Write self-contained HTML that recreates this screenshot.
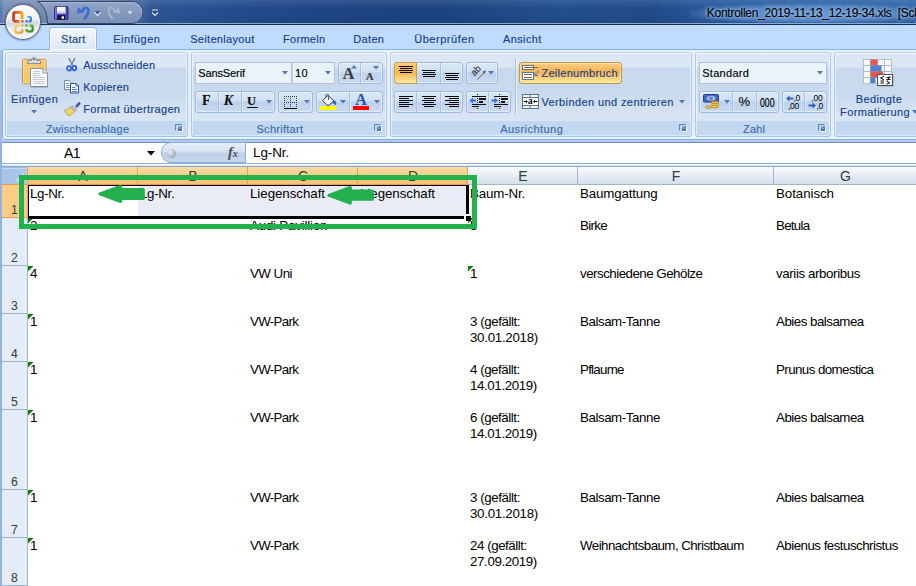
<!DOCTYPE html>
<html lang="de"><head><meta charset="utf-8"><title>Kontrollen_2019-11-13_12-19-34.xls</title>
<style>
*{box-sizing:border-box;margin:0;padding:0}
html,body{width:916px;height:586px;overflow:hidden;background:#fff}
body{position:relative;font-family:"Liberation Sans",sans-serif;font-size:12px;color:#15428b}
.a{position:absolute}
.t{position:absolute;white-space:nowrap;line-height:14px}
/* title */
#title{left:0;top:0;width:916px;height:25px;background:linear-gradient(90deg,#5b80b5 0,#5b80b5 2px,#7a90b6 3px,#788fb5 40px,#5f7aa8 100px,#3d6099 144px,#2e5796 150px,#234b8c 250px,#1d4584 350px,#1c4482 440px,#23508e 560px,#214c8a 650px,#27569a 700px,#2e60a3 780px,#3265a8 916px)}
#titleshade{left:0;top:0;width:916px;height:25px;background:linear-gradient(180deg,rgba(255,255,255,.10) 0,rgba(255,255,255,0) 8px,rgba(0,0,0,.05) 22px,rgba(0,0,0,.05) 23px,rgba(170,195,225,.75) 23px,rgba(170,195,225,.75) 24px,transparent 24px)}
#titleline{left:0;top:24px;width:916px;height:1px;background:#1c2c48}
#tabs{left:0;top:25px;width:916px;height:25px;background:#bfdbff}
#ribbon{left:2px;top:49px;width:930px;height:91px;border:1px solid #8db2e3;border-bottom-color:#9bb0d4;border-radius:3px;background:linear-gradient(180deg,#e8f1fb 0,#e6effa 3px,#e3edf9 70px,#e6f0fb 86px,#f0f7fe 87px,#f0f7fe 88px,#cdf3fa 88px,#cdf3fa 89px)}
.grp{position:absolute;top:52px;height:85px;border:1px solid #b1c9e6;border-top-color:#c4d3e2;border-bottom-color:#9ebfe6;border-radius:3px;background:linear-gradient(180deg,#dde8f6 0,#dbe6f4 14px,#c9d9ed 15px,#cadaee 40px,#d9e6f4 68px,#c2d8f0 68px,#c1d8f1 84px);box-shadow:inset 1px 1px 0 rgba(255,255,255,.55),inset -1px -1px 0 rgba(255,255,255,.45)}
.glab{position:absolute;top:122px;font-size:12px;line-height:14px;color:#3e6aaa;white-space:nowrap;text-align:center}
.c{font-size:13.33px;line-height:16px;color:#000}
</style></head><body>
<div id="title" class="a"></div><div id="titleshade" class="a"></div><div id="titleline" class="a"></div>
<div id="tabs" class="a"></div>
<div id="ribbon" class="a"></div>
<!--GROUPS-->
<svg class="a" style="left:30px;top:0px" width="125" height="26"><defs><linearGradient id="qg" x1="0" y1="0" x2="0" y2="1"><stop offset="0" stop-color="#93a6c7"/><stop offset=".5" stop-color="#8398bd"/><stop offset="1" stop-color="#7a90b7"/></linearGradient></defs>
<path d="M7.5 1.5 H102 A11 11 0 0 1 102 23.5 H17.5 C17.5 12 13 4.5 7.5 1.5 Z" fill="url(#qg)" stroke="#34476b" stroke-width="1"/>
<path d="M10.5 2.6 H102 A9.9 9.9 0 0 1 111.9 12.5" fill="none" stroke="#aebbd4" stroke-width="1" opacity=".8"/></svg>
<div class="a" id="orb" style="left:5px;top:4px;width:36px;height:36px;border-radius:18px;background:linear-gradient(180deg,#fbfcfe 0,#eef1f7 40%,#d9dfea 48%,#cfd7e5 54%,#e6eaf2 68%,#f5f7fb 100%);border:1px solid #5f6c84;box-shadow:0 0 2px rgba(20,30,50,.85), inset 0 0 2px 1px rgba(255,255,255,.9)"></div>
<svg class="a" style="left:5px;top:4px" width="36" height="36"><defs><linearGradient id="og1" x1="0" y1="0" x2="1" y2="0"><stop offset="0" stop-color="#d63a0c"/><stop offset="1" stop-color="#f8a020"/></linearGradient>
<linearGradient id="og2" x1="0" y1="0" x2="1" y2="1"><stop offset="0" stop-color="#fdd774"/><stop offset="1" stop-color="#f59a14"/></linearGradient>
<linearGradient id="og3" x1="0" y1="0" x2="1" y2="1"><stop offset="0" stop-color="#7fc043"/><stop offset="1" stop-color="#3f8a1f"/></linearGradient>
<linearGradient id="og4" x1="0" y1="0" x2="1" y2="1"><stop offset="0" stop-color="#5eb0ee"/><stop offset="1" stop-color="#1d63c8"/></linearGradient></defs>
<path d="M14.600 17.450 H10.550 A2 2 0 0 1 8.550 15.450 V10.350 A2 2 0 0 1 10.550 8.350 H15.150 A2 2 0 0 1 17.150 10.350 V15" fill="none" stroke="url(#og1)" stroke-width="2.7"/>
<path d="M22.500 13 H24.600 A1.300 1.300 0 0 1 25.900 14.300 V16.200 A1.300 1.300 0 0 1 24.600 17.500 H23.500" fill="none" stroke="url(#og4)" stroke-width="1.9"/>
<path d="M14 21.500 H12.100 A1.800 1.800 0 0 0 10.300 23.300 V26.800 A1.800 1.800 0 0 0 12.100 28.600 H15.500 A1.800 1.800 0 0 0 17.300 26.800 V25" fill="none" stroke="url(#og2)" stroke-width="2.4"/>
<path d="M24.500 21.500 H25.900 A1.800 1.800 0 0 1 27.700 23.300 V25.600 A1.800 1.800 0 0 1 25.900 27.400 H23.100 A1.800 1.800 0 0 1 21.300 25.600 V25" fill="none" stroke="url(#og3)" stroke-width="2.4"/>
<circle cx="17.4" cy="17.2" r="1.2" fill="#e8501a"/><circle cx="21.5" cy="17.2" r="1.2" fill="#2f7bd8"/><circle cx="17.4" cy="21.5" r="1.2" fill="#f6b02c"/><circle cx="21.5" cy="21.5" r="1.2" fill="#5aa52c"/></svg>
<svg class="a" style="left:54px;top:6px" width="15" height="14"><rect x="0.5" y="0.500" width="13.500" height="13" rx="1" fill="#4c43b8" stroke="#2f2a86"/><rect x="1" y="1" width="1.500" height="12" fill="#8f8ad8" opacity=".8"/><rect x="3" y="0.800" width="8.500" height="6.500" fill="#f6f7fb"/><rect x="3" y="5" width="8.500" height="2.300" fill="#d5d8e6"/><rect x="3.500" y="9.300" width="7.500" height="4.200" fill="#0e0e2a"/><rect x="7.500" y="10.300" width="2.500" height="2.500" fill="#e8e8f0"/></svg>
<svg class="a" style="left:74px;top:3px" width="18" height="18"><path d="M8.500 8 C9.500 3.800 14.500 3.300 14.500 7.800 C14.500 11 12.500 13.500 10.800 15.300" fill="none" stroke="#3a6fd8" stroke-width="2.500" stroke-linecap="round"/><path d="M2.600 10.600 L4.300 4.300 L10.300 9.300 Z" fill="#3a6fd8"/></svg>
<svg class="a" style="left:94px;top:10px" width="8" height="7"><path d="M0.800 1.200h5.600l-2.800 3.400z" fill="#2d4f9a"/><path d="M0.700 2.300l2.900 3.200 2.900-3.200" fill="none" stroke="#f0f4fa" stroke-width="1.100"/></svg>
<svg class="a" style="left:105px;top:3px" width="18" height="18"><path d="M9.500 8 C8.500 3.800 3.500 3.300 3.500 7.800 C3.500 11 5.500 13.500 7.200 15.300" fill="none" stroke="#a9b6cf" stroke-width="2" stroke-linecap="round"/><path d="M15.400 10.600 L13.700 4.300 L7.700 9.300 Z" fill="#a9b6cf"/></svg>
<svg class="a" style="left:126px;top:10px" width="8" height="6"><path d="M1 1h6l-3 3.600z" fill="#dfe4ee" stroke="#8d9ab5" stroke-width=".5"/></svg>
<svg class="a" style="left:150px;top:8px" width="10" height="10"><path d="M2 2h6" stroke="#2d3f63" stroke-width="2.200"/><path d="M2 2h6" stroke="#e6ecf6" stroke-width="1.1"/><path d="M2 4.500l3 3 3-3" fill="none" stroke="#2d3f63" stroke-width="2.200"/><path d="M2 4.500l3 3 3-3" fill="none" stroke="#e6ecf6" stroke-width="1.100"/></svg>
<div class="a" style="left:690px;top:2px;width:240px;height:21px;background:radial-gradient(ellipse 130px 11px at 50% 55%,rgba(125,170,225,.75) 0,rgba(115,162,220,.6) 60%,rgba(105,150,212,0) 100%)"></div>
<div class="t" id="ttl" style="left:706.8px;top:5px;line-height:16px;font-size:12px;color:#000;-webkit-text-stroke:0.15px #000;letter-spacing:0.000px;white-space:pre;letter-spacing:-0.27px;text-shadow:0 0 3px rgba(175,208,245,.9),0 0 5px rgba(150,190,238,.9),0 0 8px rgba(130,175,230,.8);">Kontrollen_2019-11-13_12-19-34.xls  [Schreibgeschützt]</div>
<div class="a" id="starttab" style="left:49px;top:27px;width:48px;height:23px;border:1px solid #98b9e3;border-bottom:none;border-radius:4px 4px 0 0;background:linear-gradient(180deg,#f3f8fe 0,#e6effa 50%,#dbe8f8 100%);box-shadow:inset 0 0 0 1px rgba(255,255,255,.7)"></div>
<div class="t" id="tab0" style="left:61.1px;top:31px;line-height:16px;font-size:11px;color:#15428b;-webkit-text-stroke:0.15px #15428b;letter-spacing:0.241px;">Start</div>
<div class="t" id="tab1" style="left:113.2px;top:31px;line-height:16px;font-size:11px;color:#15428b;-webkit-text-stroke:0.15px #15428b;letter-spacing:0.466px;">Einfügen</div>
<div class="t" id="tab2" style="left:190.2px;top:31px;line-height:16px;font-size:11px;color:#15428b;-webkit-text-stroke:0.15px #15428b;letter-spacing:0.314px;">Seitenlayout</div>
<div class="t" id="tab3" style="left:283.1px;top:31px;line-height:16px;font-size:11px;color:#15428b;-webkit-text-stroke:0.15px #15428b;letter-spacing:0.276px;">Formeln</div>
<div class="t" id="tab4" style="left:353.2px;top:31px;line-height:16px;font-size:11px;color:#15428b;-webkit-text-stroke:0.15px #15428b;letter-spacing:0.360px;">Daten</div>
<div class="t" id="tab5" style="left:414.2px;top:31px;line-height:16px;font-size:11px;color:#15428b;-webkit-text-stroke:0.15px #15428b;letter-spacing:0.539px;">Überprüfen</div>
<div class="t" id="tab6" style="left:503.0px;top:31px;line-height:16px;font-size:11px;color:#15428b;-webkit-text-stroke:0.15px #15428b;letter-spacing:0.370px;">Ansicht</div>
<div class="grp" id="g0" style="left:5px;width:183px"></div>
<div class="grp" id="g1" style="left:191px;width:196px"></div>
<div class="grp" id="g2" style="left:390px;width:302px"></div>
<div class="grp" id="g3" style="left:695px;width:136px"></div>
<div class="grp" id="g4" style="left:834px;width:96px"></div>
<div class="t" id="l0" style="left:45.8px;top:121px;line-height:16px;font-size:11px;color:#3e6aaa;-webkit-text-stroke:0.15px #3e6aaa;letter-spacing:0.285px;">Zwischenablage</div>
<div class="t" id="l1" style="left:256.5px;top:121px;line-height:16px;font-size:11px;color:#3e6aaa;-webkit-text-stroke:0.15px #3e6aaa;letter-spacing:0.276px;">Schriftart</div>
<div class="t" id="l2" style="left:500.2px;top:121px;line-height:16px;font-size:11px;color:#3e6aaa;-webkit-text-stroke:0.15px #3e6aaa;letter-spacing:0.451px;">Ausrichtung</div>
<div class="t" id="l3" style="left:743.1px;top:121px;line-height:16px;font-size:11px;color:#3e6aaa;-webkit-text-stroke:0.15px #3e6aaa;letter-spacing:0.131px;">Zahl</div>
<svg class="a" style="left:175px;top:124px" width="9" height="9"><path d="M0.500 6.500V0.500H6.500" fill="none" stroke="#5f85b5" stroke-width="1"/><rect x="3" y="2.500" width="4" height="4.500" fill="#4a76ab"/><path d="M3.500 7.500h4V3" fill="none" stroke="#fff" stroke-width="1"/><path d="M3.500 3l2 2" stroke="#dbe6f4" stroke-width=".8"/></svg>
<svg class="a" style="left:374px;top:124px" width="9" height="9"><path d="M0.500 6.500V0.500H6.500" fill="none" stroke="#5f85b5" stroke-width="1"/><rect x="3" y="2.500" width="4" height="4.500" fill="#4a76ab"/><path d="M3.500 7.500h4V3" fill="none" stroke="#fff" stroke-width="1"/><path d="M3.500 3l2 2" stroke="#dbe6f4" stroke-width=".8"/></svg>
<svg class="a" style="left:679px;top:124px" width="9" height="9"><path d="M0.500 6.500V0.500H6.500" fill="none" stroke="#5f85b5" stroke-width="1"/><rect x="3" y="2.500" width="4" height="4.500" fill="#4a76ab"/><path d="M3.500 7.500h4V3" fill="none" stroke="#fff" stroke-width="1"/><path d="M3.500 3l2 2" stroke="#dbe6f4" stroke-width=".8"/></svg>
<svg class="a" style="left:818px;top:124px" width="9" height="9"><path d="M0.500 6.500V0.500H6.500" fill="none" stroke="#5f85b5" stroke-width="1"/><rect x="3" y="2.500" width="4" height="4.500" fill="#4a76ab"/><path d="M3.500 7.500h4V3" fill="none" stroke="#fff" stroke-width="1"/><path d="M3.500 3l2 2" stroke="#dbe6f4" stroke-width=".8"/></svg>
<svg class="a" style="left:21px;top:56px" width="28" height="32"><defs><linearGradient id="cbg" x1="0" y1="0" x2="1" y2="1"><stop offset="0" stop-color="#f7d583"/><stop offset="1" stop-color="#eeb955"/></linearGradient></defs>
<rect x="1.5" y="3.300" width="23.500" height="24.500" rx="1.200" fill="url(#cbg)" stroke="#c0934a"/><rect x="2.500" y="4.300" width="21.500" height="22.500" fill="none" stroke="#f9dea0" stroke-width="1" opacity=".8"/>
<path d="M6.500 7.300 V5.500 Q6.500 4.500 7.500 4.500 H10.500 Q11 1.500 13 1.500 Q15 1.500 15.500 4.500 H18.500 Q19.500 4.500 19.500 5.500 V7.300 Z" fill="#e6e9ee" stroke="#6b7686" stroke-width=".9"/><circle cx="13" cy="3.600" r="1" fill="#7a5a2a"/>
<path d="M9.500 12.500h12.500l4.500 4.500V30.500H9.500z" fill="#fdfdfe" stroke="#8492a8"/><path d="M22 12.500v4.500h4.500" fill="#e4e9f1" stroke="#8492a8"/><path d="M10 31h17" stroke="#5f6f8a" stroke-width="1" opacity=".6"/>
<path d="M12 15.500h7M12 17.500h7M12 19.500h7M12 21.500h12M12 23.500h12M12 25.500h12M12 27.500h12" stroke="#c3cad6" stroke-width="1" shape-rendering="crispEdges"/></svg>
<div class="t" id="einf" style="left:11.1px;top:91px;line-height:16px;font-size:11px;color:#15428b;-webkit-text-stroke:0.15px #15428b;letter-spacing:0.466px;">Einfügen</div>
<svg class="a" style="left:31px;top:110.0px" width="6" height="4"><path d="M0 0h6l-3 3.5z" fill="#4f78b5"/></svg>
<svg class="a" style="left:66px;top:57px" width="12" height="16"><path d="M2.700 1 L6.700 8.500 M9 1 L5 8.500" stroke="#7a828e" stroke-width="1.500" fill="none"/><ellipse cx="3.100" cy="11.400" rx="2" ry="2.300" fill="none" stroke="#2f5fd0" stroke-width="1.700"/><ellipse cx="8.300" cy="11.100" rx="2" ry="2.300" fill="none" stroke="#2f5fd0" stroke-width="1.700"/></svg>
<div class="t" id="cut" style="left:83.2px;top:57px;line-height:16px;font-size:11px;color:#15428b;-webkit-text-stroke:0.15px #15428b;letter-spacing:0.254px;">Ausschneiden</div>
<svg class="a" style="left:64px;top:80px" width="16" height="14"><path d="M0.500 0.500h4.500l2 2v7h-6.500z" fill="#fff" stroke="#7688b0"/><path d="M2 3.500h3M2 5.500h3.500M2 7.500h3.500" stroke="#6f94dc" stroke-width="1"/><path d="M6.500 3.500h5.500l2.500 2.500v7h-8z" fill="#fff" stroke="#2a4fa0"/><path d="M12 3.500v2.500h2.500" fill="none" stroke="#2a4fa0" stroke-width=".8"/><path d="M8 7.500h3.500M8 9.500h5M8 11.500h5" stroke="#4f7fd8" stroke-width="1"/></svg>
<div class="t" id="copy" style="left:83.2px;top:79px;line-height:16px;font-size:11px;color:#15428b;-webkit-text-stroke:0.15px #15428b;letter-spacing:0.250px;">Kopieren</div>
<svg class="a" style="left:63px;top:101px" width="18" height="16"><path d="M12.500 5.200 L15.300 1.800 Q16.300 1 17 1.900 Q17.600 2.700 16.800 3.500 L13.800 6.500z" fill="#5a50b8" stroke="#3b3285" stroke-width=".6"/><path d="M9 4.800 L13.600 8.800 L11.800 10.500 L7.500 6.500z" fill="#c5cad3" stroke="#767e8c" stroke-width=".6"/><path d="M7.500 6.500 L11.800 10.500 L7 14.800 Q4 15 1.300 9.500 Z" fill="#efd978" stroke="#a88f35" stroke-width=".7"/><path d="M3.500 10l3.500 3.500M5.300 8.500l3.700 3.700" stroke="#d2b750" stroke-width=".7"/></svg>
<div class="t" id="fmt" style="left:83.2px;top:101px;line-height:16px;font-size:11px;color:#15428b;-webkit-text-stroke:0.15px #15428b;letter-spacing:0.356px;">Format übertragen</div>
<div class="a" id="fontcb" style="left:195px;top:62px;width:97px;height:22px;background:#eaf2fb;border:1px solid #abc4e4;"></div>
<div class="a" id="sizecb" style="left:292px;top:62px;width:43px;height:22px;background:#eaf2fb;border:1px solid #abc4e4;border-left:1px solid #c5d6ec"></div>
<div class="t" id="fname" style="left:198.2px;top:65px;line-height:16px;font-size:11px;color:#000;-webkit-text-stroke:0.15px #000;letter-spacing:-0.100px;">SansSerif</div>
<div class="t" id="fsize" style="left:295.1px;top:65px;line-height:16px;font-size:11px;color:#000;-webkit-text-stroke:0.15px #000;letter-spacing:0.000px;letter-spacing:.3px;">10</div>
<svg class="a" style="left:281.6px;top:71.0px" width="6" height="4"><path d="M0 0h6l-3 3.5z" fill="#4f78b5"/></svg>
<svg class="a" style="left:324.6px;top:71.0px" width="6" height="4"><path d="M0 0h6l-3 3.5z" fill="#4f78b5"/></svg>
<div class="a" style="left:338px;top:62px;width:45px;height:22px;background:linear-gradient(180deg,#dbe8f7 0,#cfdff2 45%,#bdd1ec 50%,#c9dbf0 100%);border:1px solid #9ebae1;border-radius:3px;box-shadow:inset 0 0 0 1px rgba(255,255,255,.45);"></div>
<div class="a" style="left:360px;top:63px;width:1px;height:20px;background:#a9c2e3"></div>
<div class="a" style="left:361px;top:63px;width:1px;height:20px;background:rgba(255,255,255,.35)"></div>
<div class="t" id="bigA" style="left:342.8px;top:66px;line-height:16px;font-size:16px;color:#3b3b3b;-webkit-text-stroke:0.15px #3b3b3b;letter-spacing:0.000px;font-family:'Liberation Serif',serif;font-weight:bold;">A</div>
<div class="t" id="smallA" style="left:365.8px;top:68px;line-height:16px;font-size:11px;color:#3b3b3b;-webkit-text-stroke:0.15px #3b3b3b;letter-spacing:0.000px;font-family:'Liberation Serif',serif;font-weight:bold;">A</div>
<svg class="a" style="left:351px;top:65px" width="6" height="4"><path d="M0 3.5h6l-3-3.5z" fill="#4f78b5"/></svg>
<svg class="a" style="left:373px;top:66px" width="6" height="4"><path d="M0 0h6l-3 3.5z" fill="#4f78b5"/></svg>
<div class="a" style="left:195px;top:91px;width:80px;height:22px;background:linear-gradient(180deg,#dbe8f7 0,#cfdff2 45%,#bdd1ec 50%,#c9dbf0 100%);border:1px solid #9ebae1;border-radius:3px;box-shadow:inset 0 0 0 1px rgba(255,255,255,.45);"></div>
<div class="a" style="left:218px;top:92px;width:1px;height:20px;background:#a9c2e3"></div>
<div class="a" style="left:219px;top:92px;width:1px;height:20px;background:rgba(255,255,255,.35)"></div>
<div class="a" style="left:241px;top:92px;width:1px;height:20px;background:#a9c2e3"></div>
<div class="a" style="left:242px;top:92px;width:1px;height:20px;background:rgba(255,255,255,.35)"></div>
<div class="t" id="bF" style="left:202.1px;top:93px;line-height:16px;font-size:14px;color:#111;-webkit-text-stroke:0.15px #111;letter-spacing:0.000px;font-family:'Liberation Serif',serif;font-weight:bold;">F</div>
<div class="t" id="bK" style="left:223.8px;top:93px;line-height:16px;font-size:14px;color:#111;-webkit-text-stroke:0.15px #111;letter-spacing:0.000px;font-family:'Liberation Serif',serif;font-weight:bold;font-style:italic;">K</div>
<div class="t" id="bU" style="left:247.1px;top:93px;line-height:16px;font-size:12.5px;color:#111;-webkit-text-stroke:0.15px #111;letter-spacing:0.000px;font-family:'Liberation Serif',serif;font-weight:bold;">U</div>
<div class="a" style="left:247px;top:107px;width:11px;height:1px;background:#111"></div>
<svg class="a" style="left:265.6px;top:99.8px" width="6" height="4"><path d="M0 0h6l-3 3.5z" fill="#4f78b5"/></svg>
<div class="a" style="left:278px;top:91px;width:35px;height:22px;background:linear-gradient(180deg,#dbe8f7 0,#cfdff2 45%,#bdd1ec 50%,#c9dbf0 100%);border:1px solid #9ebae1;border-radius:3px;box-shadow:inset 0 0 0 1px rgba(255,255,255,.45);"></div>
<svg class="a" style="left:283px;top:95px" width="15" height="15"><g shape-rendering="crispEdges"><path d="M1 1.5h13M1 7.5h13M1.5 1v12M7.5 1v12M13.5 1v12" stroke="#3a3a3a" stroke-width="1" stroke-dasharray="1 1" fill="none"/><path d="M1 13.500h13" stroke="#000" stroke-width="1.6"/></g></svg>
<svg class="a" style="left:303.6px;top:99.8px" width="6" height="4"><path d="M0 0h6l-3 3.5z" fill="#4f78b5"/></svg>
<div class="a" style="left:316px;top:91px;width:67px;height:22px;background:linear-gradient(180deg,#dbe8f7 0,#cfdff2 45%,#bdd1ec 50%,#c9dbf0 100%);border:1px solid #9ebae1;border-radius:3px;box-shadow:inset 0 0 0 1px rgba(255,255,255,.45);"></div>
<div class="a" style="left:349px;top:92px;width:1px;height:20px;background:#a9c2e3"></div>
<div class="a" style="left:350px;top:92px;width:1px;height:20px;background:rgba(255,255,255,.35)"></div>
<svg class="a" style="left:319px;top:94px" width="19" height="17"><path d="M3.500 6.500 L9 1.500 L15 7 L9 11.800 Z" fill="#f8f9fc" stroke="#3a3f48" stroke-width="1"/><path d="M9.500 6 V1.200 C9.500 -0.300 7 -0.300 7 1.200 V3" fill="none" stroke="#4a505a" stroke-width=".9"/><path d="M14.500 6.500 C17.200 6.200 18 9 16.800 11.500 C16 10.500 15 9.500 13 9z" fill="#2f66cc"/><rect x="1" y="12" width="16" height="4" fill="#ffff00"/></svg>
<svg class="a" style="left:340.4px;top:99.8px" width="6" height="4"><path d="M0 0h6l-3 3.5z" fill="#4f78b5"/></svg>
<div class="t" id="fcA" style="left:355.3px;top:92px;line-height:16px;font-size:16px;color:#2b55a8;-webkit-text-stroke:0.15px #2b55a8;letter-spacing:0.000px;font-family:'Liberation Serif',serif;font-weight:bold;">A</div>
<div class="a" style="left:353px;top:106px;width:16px;height:4px;background:#ff0000"></div>
<svg class="a" style="left:373.5px;top:99.8px" width="6" height="4"><path d="M0 0h6l-3 3.5z" fill="#4f78b5"/></svg>
<div class="a" style="left:394px;top:62px;width:69px;height:22px;background:linear-gradient(180deg,#dbe8f7 0,#cfdff2 45%,#bdd1ec 50%,#c9dbf0 100%);border:1px solid #9ebae1;border-radius:3px;box-shadow:inset 0 0 0 1px rgba(255,255,255,.45);"></div>
<div class="a" style="left:394px;top:62px;width:23px;height:22px;background:linear-gradient(180deg,#fbd08a 0,#f9bb60 30%,#fbb652 50%,#fdd27c 75%,#fee9a2 100%);border:1px solid #c9a051;border-radius:3px 0 0 3px"></div>
<div class="a" style="left:440px;top:63px;width:1px;height:20px;background:#a9c2e3"></div>
<div class="a" style="left:441px;top:63px;width:1px;height:20px;background:rgba(255,255,255,.35)"></div>
<svg class="a" style="left:399px;top:0px" width="14" height="140"><g shape-rendering="crispEdges"><rect x="0.0" y="66" width="14" height="1" fill="#0a0a0a"/><rect x="1.0" y="68" width="12" height="1" fill="#0a0a0a"/><rect x="0.0" y="70" width="14" height="1" fill="#0a0a0a"/><rect x="1.0" y="72" width="12" height="1" fill="#0a0a0a"/></g></svg>
<svg class="a" style="left:422px;top:0px" width="14" height="140"><g shape-rendering="crispEdges"><rect x="0.0" y="70" width="14" height="1" fill="#0a0a0a"/><rect x="1.0" y="72" width="12" height="1" fill="#0a0a0a"/><rect x="0.0" y="74" width="14" height="1" fill="#0a0a0a"/><rect x="1.0" y="76" width="12" height="1" fill="#0a0a0a"/></g></svg>
<svg class="a" style="left:445px;top:0px" width="14" height="140"><g shape-rendering="crispEdges"><rect x="0.0" y="73" width="14" height="1" fill="#0a0a0a"/><rect x="1.0" y="75" width="12" height="1" fill="#0a0a0a"/><rect x="0.0" y="77" width="14" height="1" fill="#0a0a0a"/><rect x="1.0" y="79" width="12" height="1" fill="#0a0a0a"/></g></svg>
<div class="a" style="left:466px;top:62px;width:32px;height:22px;background:linear-gradient(180deg,#dbe8f7 0,#cfdff2 45%,#bdd1ec 50%,#c9dbf0 100%);border:1px solid #9ebae1;border-radius:3px;box-shadow:inset 0 0 0 1px rgba(255,255,255,.45);"></div>
<svg class="a" style="left:468px;top:63px" width="22" height="20"><text x="0" y="0" font-family="Liberation Sans, sans-serif" font-size="9.5" fill="#1a1a1a" transform="translate(6.5 13.5) rotate(-47)">ab</text><path d="M9.5 16.5 L17 8.500" stroke="#6b5555" stroke-width=".9"/><path d="M18 7.300 L14.300 8.800 L16.500 11z" fill="#6b5555"/></svg>
<svg class="a" style="left:487.5px;top:71.3px" width="6" height="4"><path d="M0 0h6l-3 3.5z" fill="#4f78b5"/></svg>
<div class="a" style="left:394px;top:91px;width:69px;height:22px;background:linear-gradient(180deg,#dbe8f7 0,#cfdff2 45%,#bdd1ec 50%,#c9dbf0 100%);border:1px solid #9ebae1;border-radius:3px;box-shadow:inset 0 0 0 1px rgba(255,255,255,.45);"></div>
<div class="a" style="left:416px;top:92px;width:1px;height:20px;background:#a9c2e3"></div>
<div class="a" style="left:417px;top:92px;width:1px;height:20px;background:rgba(255,255,255,.35)"></div>
<div class="a" style="left:440px;top:92px;width:1px;height:20px;background:#a9c2e3"></div>
<div class="a" style="left:441px;top:92px;width:1px;height:20px;background:rgba(255,255,255,.35)"></div>
<svg class="a" style="left:399px;top:0px" width="14" height="140"><g shape-rendering="crispEdges"><rect x="0" y="96" width="14" height="1" fill="#0a0a0a"/><rect x="0" y="98" width="10" height="1" fill="#0a0a0a"/><rect x="0" y="100" width="14" height="1" fill="#0a0a0a"/><rect x="0" y="102" width="10" height="1" fill="#0a0a0a"/><rect x="0" y="104" width="14" height="1" fill="#0a0a0a"/><rect x="0" y="106" width="10" height="1" fill="#0a0a0a"/></g></svg>
<svg class="a" style="left:422px;top:0px" width="14" height="140"><g shape-rendering="crispEdges"><rect x="0.0" y="96" width="14" height="1" fill="#0a0a0a"/><rect x="2.0" y="98" width="10" height="1" fill="#0a0a0a"/><rect x="0.0" y="100" width="14" height="1" fill="#0a0a0a"/><rect x="2.0" y="102" width="10" height="1" fill="#0a0a0a"/><rect x="0.0" y="104" width="14" height="1" fill="#0a0a0a"/><rect x="2.0" y="106" width="10" height="1" fill="#0a0a0a"/></g></svg>
<svg class="a" style="left:445px;top:0px" width="14" height="140"><g shape-rendering="crispEdges"><rect x="0" y="96" width="14" height="1" fill="#0a0a0a"/><rect x="4" y="98" width="10" height="1" fill="#0a0a0a"/><rect x="0" y="100" width="14" height="1" fill="#0a0a0a"/><rect x="4" y="102" width="10" height="1" fill="#0a0a0a"/><rect x="0" y="104" width="14" height="1" fill="#0a0a0a"/><rect x="4" y="106" width="10" height="1" fill="#0a0a0a"/></g></svg>
<div class="a" style="left:466px;top:91px;width:45px;height:22px;background:linear-gradient(180deg,#dbe8f7 0,#cfdff2 45%,#bdd1ec 50%,#c9dbf0 100%);border:1px solid #9ebae1;border-radius:3px;box-shadow:inset 0 0 0 1px rgba(255,255,255,.45);"></div>
<div class="a" style="left:488px;top:92px;width:1px;height:20px;background:#a9c2e3"></div>
<div class="a" style="left:489px;top:92px;width:1px;height:20px;background:rgba(255,255,255,.35)"></div>
<svg class="a" style="left:0px;top:0px" width="520" height="120"><g shape-rendering="crispEdges"><rect x="477" y="94" width="1" height="1" fill="#111"/><rect x="477" y="96" width="1" height="1" fill="#111"/><rect x="477" y="98" width="1" height="1" fill="#111"/><rect x="477" y="100" width="1" height="1" fill="#111"/><rect x="477" y="102" width="1" height="1" fill="#111"/><rect x="477" y="104" width="1" height="1" fill="#111"/><rect x="477" y="106" width="1" height="1" fill="#111"/><rect x="477" y="108" width="1" height="1" fill="#111"/><rect x="472" y="96" width="14" height="1" fill="#111"/><rect x="479" y="98" width="7" height="2" fill="#111"/><rect x="479" y="101" width="4" height="2" fill="#111"/><rect x="472" y="104" width="14" height="1" fill="#111"/><rect x="472" y="106" width="7" height="1" fill="#111"/></g><path d="M469.5 100.500l3.500-3v2h3v2h-3v2z" fill="#3b6fd0"/></svg>
<svg class="a" style="left:0px;top:0px" width="520" height="120"><g shape-rendering="crispEdges"><rect x="499" y="94" width="1" height="1" fill="#111"/><rect x="499" y="96" width="1" height="1" fill="#111"/><rect x="499" y="98" width="1" height="1" fill="#111"/><rect x="499" y="100" width="1" height="1" fill="#111"/><rect x="499" y="102" width="1" height="1" fill="#111"/><rect x="499" y="104" width="1" height="1" fill="#111"/><rect x="499" y="106" width="1" height="1" fill="#111"/><rect x="499" y="108" width="1" height="1" fill="#111"/><rect x="494" y="96" width="14" height="1" fill="#111"/><rect x="501" y="98" width="7" height="2" fill="#111"/><rect x="501" y="101" width="4" height="2" fill="#111"/><rect x="494" y="104" width="14" height="1" fill="#111"/><rect x="494" y="106" width="7" height="1" fill="#111"/></g><path d="M498 100.500l-3.500-3v2h-3v2h3v2z" fill="#3b6fd0"/></svg>
<div class="a" style="left:515px;top:59px;width:1px;height:55px;background:#a3bfe2"></div>
<div class="a" style="left:516px;top:59px;width:1px;height:55px;background:rgba(255,255,255,.6)"></div>
<div class="a" id="wrapbtn" style="left:519px;top:62px;width:103px;height:22px;background:linear-gradient(180deg,#fbd08a 0,#f9bb60 30%,#fbb652 50%,#fdd27c 75%,#fee9a2 100%);border:1px solid #c2973e;border-radius:3px;box-shadow:inset 0 0 0 1px rgba(255,240,200,.6)"></div>
<svg class="a" style="left:522px;top:64px" width="18" height="17"><rect x="0.5" y="1.500" width="11" height="4" fill="#fff" stroke="#5f7396"/><path d="M2 3.500h14" stroke="#9a5a2a" stroke-width="1"/><rect x="0.5" y="8.500" width="11" height="7" fill="#fff" stroke="#5f7396"/><path d="M2 10.500h8M2 13.500h8" stroke="#9a5a2a" stroke-width="1" shape-rendering="crispEdges"/><path d="M16 6.500 C16 9 15 10 13.500 10.500" fill="none" stroke="#3b6fd0" stroke-width="1"/><path d="M12.800 8.500v3h3" fill="none" stroke="#3b6fd0" stroke-width="1"/></svg>
<div class="t" id="wrap" style="left:541.4px;top:65px;line-height:16px;font-size:11px;color:#15428b;-webkit-text-stroke:0.15px #15428b;letter-spacing:0.295px;">Zeilenumbruch</div>
<svg class="a" style="left:522px;top:94px" width="17" height="15"><rect x="0.5" y="0.500" width="16" height="14" fill="#f4f7fb" stroke="#5f7396"/><path d="M0.500 3.500h16M0.500 11.500h16M8 0.500v3M8 11.500v3" stroke="#5f7396" stroke-width="1"/><rect x="1" y="4" width="15" height="7" fill="#fff"/><text x="8.300" y="10.300" text-anchor="middle" font-family="Liberation Serif, serif" font-weight="bold" font-size="10" fill="#111">a</text><path d="M1.500 7.500h3.500M12 7.500h3.500" stroke="#111" stroke-width="1"/><path d="M4 6l1.500 1.500L4 9M13 6l-1.500 1.500L13 9" stroke="#111" stroke-width=".8" fill="none"/></svg>
<div class="t" id="merge" style="left:541.4px;top:94px;line-height:16px;font-size:11px;color:#15428b;-webkit-text-stroke:0.15px #15428b;letter-spacing:0.398px;">Verbinden und zentrieren</div>
<svg class="a" style="left:678.7px;top:100.0px" width="6" height="4"><path d="M0 0h6l-3 3.5z" fill="#4f78b5"/></svg>
<div class="a" id="numcb" style="left:699px;top:62px;width:128px;height:22px;background:#eaf2fb;border:1px solid #abc4e4;"></div>
<div class="t" id="std" style="left:702.2px;top:65px;line-height:16px;font-size:11px;color:#000;-webkit-text-stroke:0.15px #000;letter-spacing:0.292px;">Standard</div>
<svg class="a" style="left:816.5px;top:71.0px" width="6" height="4"><path d="M0 0h6l-3 3.5z" fill="#4f78b5"/></svg>
<div class="a" style="left:699px;top:91px;width:80px;height:22px;background:linear-gradient(180deg,#dbe8f7 0,#cfdff2 45%,#bdd1ec 50%,#c9dbf0 100%);border:1px solid #9ebae1;border-radius:3px;box-shadow:inset 0 0 0 1px rgba(255,255,255,.45);"></div>
<div class="a" style="left:732px;top:92px;width:1px;height:20px;background:#a9c2e3"></div>
<div class="a" style="left:733px;top:92px;width:1px;height:20px;background:rgba(255,255,255,.35)"></div>
<div class="a" style="left:756px;top:92px;width:1px;height:20px;background:#a9c2e3"></div>
<div class="a" style="left:757px;top:92px;width:1px;height:20px;background:rgba(255,255,255,.35)"></div>
<svg class="a" style="left:702px;top:93px" width="20" height="19"><rect x="1.5" y="1.500" width="15" height="7.500" rx="1" fill="#3f63c4" stroke="#27408f"/><ellipse cx="9" cy="5.200" rx="4.500" ry="2.500" fill="#a9bdec"/><ellipse cx="9" cy="5.200" rx="2" ry="1.800" fill="#5f7fd0"/>
<ellipse cx="13" cy="9.600" rx="3.700" ry="1.400" fill="#f8cb4c" stroke="#a87510" stroke-width=".7"/><ellipse cx="13" cy="11.600" rx="3.700" ry="1.400" fill="#f8cb4c" stroke="#a87510" stroke-width=".7"/><ellipse cx="13" cy="13.600" rx="3.700" ry="1.400" fill="#f8cb4c" stroke="#a87510" stroke-width=".7"/><ellipse cx="6.500" cy="14.200" rx="3" ry="1.200" fill="#f8cb4c" stroke="#a87510" stroke-width=".7"/></svg>
<svg class="a" style="left:723.7px;top:100.1px" width="6" height="4"><path d="M0 0h6l-3 3.5z" fill="#4f78b5"/></svg>
<div class="t" id="pct" style="left:738.5px;top:94px;line-height:16px;font-size:13px;color:#111;-webkit-text-stroke:0.15px #111;letter-spacing:0.000px;">%</div>
<div class="t" id="k000" style="left:760.1px;top:95px;line-height:16px;font-size:12.5px;color:#000;-webkit-text-stroke:0.15px #000;letter-spacing:0.000px;transform-origin:0 50%;transform:scaleX(.7);">000</div>
<div class="a" style="left:782px;top:91px;width:45px;height:22px;background:linear-gradient(180deg,#dbe8f7 0,#cfdff2 45%,#bdd1ec 50%,#c9dbf0 100%);border:1px solid #9ebae1;border-radius:3px;box-shadow:inset 0 0 0 1px rgba(255,255,255,.45);"></div>
<div class="a" style="left:804px;top:92px;width:1px;height:20px;background:#a9c2e3"></div>
<div class="a" style="left:805px;top:92px;width:1px;height:20px;background:rgba(255,255,255,.35)"></div>
<svg class="a" style="left:785px;top:94px" width="18" height="17"><path d="M1 4.500l3.500-3v2h4v2h-4v2z" fill="#2f5fc0"/><text x="8.500" y="7" font-family="Liberation Sans, sans-serif" font-size="8.5" fill="#000" letter-spacing="-.3">,0</text><text x="3" y="15" font-family="Liberation Sans, sans-serif" font-size="8.5" fill="#000" letter-spacing="-.3">,00</text></svg>
<svg class="a" style="left:807px;top:94px" width="18" height="17"><text x="4.500" y="7" font-family="Liberation Sans, sans-serif" font-size="8.5" fill="#000" letter-spacing="-.3">,00</text><path d="M9 11.500l-3.500-3v2h-4v2h4v2z" fill="#2f5fc0"/><text x="9.500" y="15" font-family="Liberation Sans, sans-serif" font-size="8.5" fill="#000" letter-spacing="-.3">,0</text></svg>
<svg class="a" style="left:863px;top:58px" width="32" height="31"><g transform="translate(0 1)"><rect x="0.5" y="0.5" width="7" height="6" fill="#f9fafc" stroke="#aab3c2" stroke-width=".8"/><rect x="7.5" y="0.5" width="7" height="6" fill="#f9fafc" stroke="#aab3c2" stroke-width=".8"/><rect x="14.5" y="0.5" width="7" height="6" fill="#f9fafc" stroke="#aab3c2" stroke-width=".8"/><rect x="21.5" y="0.5" width="7" height="6" fill="#f9fafc" stroke="#aab3c2" stroke-width=".8"/><rect x="0.5" y="6.5" width="7" height="6" fill="#f9fafc" stroke="#aab3c2" stroke-width=".8"/><rect x="7.5" y="6.5" width="7" height="6" fill="#f9fafc" stroke="#aab3c2" stroke-width=".8"/><rect x="14.5" y="6.5" width="7" height="6" fill="#f9fafc" stroke="#aab3c2" stroke-width=".8"/><rect x="21.5" y="6.5" width="7" height="6" fill="#f9fafc" stroke="#aab3c2" stroke-width=".8"/><rect x="0.5" y="12.5" width="7" height="6" fill="#f9fafc" stroke="#aab3c2" stroke-width=".8"/><rect x="7.5" y="12.5" width="7" height="6" fill="#f9fafc" stroke="#aab3c2" stroke-width=".8"/><rect x="14.5" y="12.5" width="7" height="6" fill="#f9fafc" stroke="#aab3c2" stroke-width=".8"/><rect x="21.5" y="12.5" width="7" height="6" fill="#f9fafc" stroke="#aab3c2" stroke-width=".8"/><rect x="0.5" y="18.5" width="7" height="6" fill="#f9fafc" stroke="#aab3c2" stroke-width=".8"/><rect x="7.5" y="18.5" width="7" height="6" fill="#f9fafc" stroke="#aab3c2" stroke-width=".8"/><rect x="14.5" y="18.5" width="7" height="6" fill="#f9fafc" stroke="#aab3c2" stroke-width=".8"/><rect x="21.5" y="18.5" width="7" height="6" fill="#f9fafc" stroke="#aab3c2" stroke-width=".8"/><rect x="7.5" y="0.5" width="7" height="6" fill="#e8554e"/><rect x="7.5" y="6.5" width="11" height="6" fill="#4f7fd8"/><rect x="7.500" y="12.500" width="12.500" height="6" fill="#e8554e"/><rect x="7.5" y="18.5" width="5" height="5.5" fill="#4f7fd8"/></g><rect x="15.5" y="17.500" width="15" height="11" fill="rgba(60,70,90,.35)"/><rect x="14.5" y="16.500" width="15" height="11" fill="#fbfcfe" stroke="#4a5260"/><path d="M21 18.300l-3.500 1.700 3.500 1.700M17.500 23h3.500M17.500 25h3.500M23.500 19.500h4M23.500 21.500h4M26.500 18.300l-2 4.200M23.500 23.200l3.500 1.500-3.500 1.500" fill="none" stroke="#111" stroke-width="1"/></svg>
<div class="t" id="bed" style="left:855.8px;top:91px;line-height:16px;font-size:11px;color:#15428b;-webkit-text-stroke:0.15px #15428b;letter-spacing:0.380px;">Bedingte</div>
<div class="t" id="form" style="left:840.1px;top:104px;line-height:16px;font-size:11px;color:#15428b;-webkit-text-stroke:0.15px #15428b;letter-spacing:0.380px;">Formatierung</div>
<svg class="a" style="left:911.5px;top:110.0px" width="6" height="4"><path d="M0 0h6l-3 3.5z" fill="#4f78b5"/></svg>
<!--/GROUPS-->
<!--FORMULA-->
<!--SHEET-->
<div class="a" id="fbbg" style="left:0;top:140px;width:916px;height:27px;background:linear-gradient(180deg,#b3c9eb 0,#b3c9eb 2px,#6a8dbb 2px,#6a8dbb 3px,#fff 3px)"></div>
<div class="a" id="namebox" style="left:3px;top:143px;width:159px;height:20px;background:#fff"></div>
<div class="a" id="fxpill" style="left:161px;top:142px;width:85px;height:21px;background:linear-gradient(180deg,#e3ecf8 0,#d3e0f2 45%,#bccfe9 55%,#c4d6ee 100%);border:1px solid #8fb0da;border-right:1px solid #9db9dd;border-radius:10px 0 0 10px"></div>
<div class="a" style="left:154px;top:143px;width:14px;height:20px;background:#fff;border-radius:0"></div>
<div class="a" id="fxpill2" style="left:161px;top:142px;width:85px;height:21px;background:linear-gradient(180deg,#e6eef9 0,#d5e2f3 45%,#bccfe9 55%,#c6d8ef 100%);border:1px solid #8fb0da;border-radius:10px 0 0 10px"></div>
<div class="a" style="left:167px;top:149px;width:8.5px;height:8.5px;border-radius:5px;background:radial-gradient(circle at 35% 35%,#eceef2,#b3bac5 55%,#8d97a8)"></div>
<div class="t" id="fx" style="left:228px;top:144px;font-family:'Liberation Serif',serif;font-style:italic;font-weight:bold;font-size:14.5px;color:#4a4a4a;line-height:16px">f<span style="font-size:10px">x</span></div>
<div class="a" id="fin" style="left:246px;top:143px;width:670px;height:20px;background:#fff"></div>
<div class="a" style="left:0;top:163px;width:916px;height:1px;background:#8faed6"></div>
<div class="a" style="left:0;top:164px;width:916px;height:2px;background:linear-gradient(180deg,#fff 0,#fff 1px,#dce9f9 1px)"></div>
<div class="a" style="left:0;top:166px;width:916px;height:1px;background:#8aa8d0"></div>
<div class="t" id="a1" style="left:64px;top:145px;font-size:14px;letter-spacing:-0.6px;color:#000;line-height:16px">A1</div>
<svg class="a" style="left:147px;top:151px" width="8" height="5"><path d="M0 0h8l-4 4.5z" fill="#000"/></svg>
<div class="t" id="ftext" style="left:253px;top:145px;font-size:13.5px;letter-spacing:-0.1px;color:#000;line-height:16px">Lg-Nr.</div>
<div class="a" style="left:0;top:167px;width:916px;height:419px;background:#fff"></div>
<div class="a" id="corner" style="left:2px;top:167px;width:26px;height:18px;background:linear-gradient(180deg,#9fb7d9 0,#9fb7d9 1px,#c6d9f1 1px,#c6d9f1 2px,#a9c4e9 2px,#a9c4e9 100%);border-right:1px solid #f0a050;border-bottom:1px solid #ee9a46;box-shadow:inset -1px 0 0 #b9d0f0"></div>
<svg class="a" style="left:14px;top:172px" width="11" height="11"><path d="M10 0v10H0z" fill="#c3d4ee"/></svg>
<div class="a" style="left:28px;top:167px;width:110px;height:18px;background:linear-gradient(180deg,#f9d9a5 0,#f8cd86 55%,#f5c173 100%);border-right:1px solid #f0a050;border-bottom:1px solid #ee9a46"></div>
<div class="t" id="chA" style="left:28px;top:169px;width:110px;text-align:center;font-size:14px;line-height:15px;color:#27413e">A</div>
<div class="a" style="left:138px;top:167px;width:110px;height:18px;background:linear-gradient(180deg,#f9d9a5 0,#f8cd86 55%,#f5c173 100%);border-right:1px solid #f0a050;border-bottom:1px solid #ee9a46"></div>
<div class="t" id="chB" style="left:138px;top:169px;width:110px;text-align:center;font-size:14px;line-height:15px;color:#27413e">B</div>
<div class="a" style="left:248px;top:167px;width:110px;height:18px;background:linear-gradient(180deg,#f9d9a5 0,#f8cd86 55%,#f5c173 100%);border-right:1px solid #f0a050;border-bottom:1px solid #ee9a46"></div>
<div class="t" id="chC" style="left:248px;top:169px;width:110px;text-align:center;font-size:14px;line-height:15px;color:#27413e">C</div>
<div class="a" style="left:358px;top:167px;width:110px;height:18px;background:linear-gradient(180deg,#f9d9a5 0,#f8cd86 55%,#f5c173 100%);border-right:1px solid #f0a050;border-bottom:1px solid #ee9a46"></div>
<div class="t" id="chD" style="left:358px;top:169px;width:110px;text-align:center;font-size:14px;line-height:15px;color:#27413e">D</div>
<div class="a" style="left:468px;top:167px;width:110px;height:18px;background:linear-gradient(180deg,#f9fcfd 0,#e9eef6 45%,#d6deeb 100%);border-right:1px solid #9eb6ce;border-bottom:1px solid #9eb6ce"></div>
<div class="t" id="chE" style="left:468px;top:169px;width:110px;text-align:center;font-size:14px;line-height:15px;color:#27413e">E</div>
<div class="a" style="left:578px;top:167px;width:196px;height:18px;background:linear-gradient(180deg,#f9fcfd 0,#e9eef6 45%,#d6deeb 100%);border-right:1px solid #9eb6ce;border-bottom:1px solid #9eb6ce"></div>
<div class="t" id="chF" style="left:578px;top:169px;width:196px;text-align:center;font-size:14px;line-height:15px;color:#27413e">F</div>
<div class="a" style="left:774px;top:167px;width:143px;height:18px;background:linear-gradient(180deg,#f9fcfd 0,#e9eef6 45%,#d6deeb 100%);border-right:1px solid #9eb6ce;border-bottom:1px solid #9eb6ce"></div>
<div class="t" id="chG" style="left:774px;top:169px;width:143px;text-align:center;font-size:14px;line-height:15px;color:#27413e">G</div>
<div class="a" style="left:2px;top:185px;width:26px;height:33px;background:#f9cd86;border-right:1px solid #f0a050;border-bottom:1px solid #ee9a46"></div>
<div class="t" id="rh1" style="left:2px;top:202px;width:25px;text-align:center;font-size:13.5px;line-height:15px;color:#27413e;transform:scaleX(.9)">1</div>
<div class="a" style="left:2px;top:218px;width:26px;height:48px;background:#e4ecf7;border-right:1px solid #9eb6ce;border-bottom:1px solid #9eb6ce"></div>
<div class="t" id="rh2" style="left:2px;top:250px;width:25px;text-align:center;font-size:13.5px;line-height:15px;color:#27413e;transform:scaleX(.9)">2</div>
<div class="a" style="left:2px;top:266px;width:26px;height:48px;background:#e4ecf7;border-right:1px solid #9eb6ce;border-bottom:1px solid #9eb6ce"></div>
<div class="t" id="rh3" style="left:2px;top:298px;width:25px;text-align:center;font-size:13.5px;line-height:15px;color:#27413e;transform:scaleX(.9)">3</div>
<div class="a" style="left:2px;top:314px;width:26px;height:48px;background:#e4ecf7;border-right:1px solid #9eb6ce;border-bottom:1px solid #9eb6ce"></div>
<div class="t" id="rh4" style="left:2px;top:346px;width:25px;text-align:center;font-size:13.5px;line-height:15px;color:#27413e;transform:scaleX(.9)">4</div>
<div class="a" style="left:2px;top:362px;width:26px;height:48px;background:#e4ecf7;border-right:1px solid #9eb6ce;border-bottom:1px solid #9eb6ce"></div>
<div class="t" id="rh5" style="left:2px;top:394px;width:25px;text-align:center;font-size:13.5px;line-height:15px;color:#27413e;transform:scaleX(.9)">5</div>
<div class="a" style="left:2px;top:410px;width:26px;height:80px;background:#e4ecf7;border-right:1px solid #9eb6ce;border-bottom:1px solid #9eb6ce"></div>
<div class="t" id="rh6" style="left:2px;top:474px;width:25px;text-align:center;font-size:13.5px;line-height:15px;color:#27413e;transform:scaleX(.9)">6</div>
<div class="a" style="left:2px;top:490px;width:26px;height:48px;background:#e4ecf7;border-right:1px solid #9eb6ce;border-bottom:1px solid #9eb6ce"></div>
<div class="t" id="rh7" style="left:2px;top:522px;width:25px;text-align:center;font-size:13.5px;line-height:15px;color:#27413e;transform:scaleX(.9)">7</div>
<div class="a" style="left:2px;top:538px;width:26px;height:48px;background:#e4ecf7;border-right:1px solid #9eb6ce;border-bottom:1px solid #9eb6ce"></div>
<div class="t" id="rh8" style="left:2px;top:570px;width:25px;text-align:center;font-size:13.5px;line-height:15px;color:#27413e;transform:scaleX(.9)">8</div>
<div class="a" id="ledge" style="left:0;top:50px;width:2px;height:536px;background:linear-gradient(180deg,#a3c0ea 0,#9dbbe6 90px,#93b2de 93px)"></div>
<div class="a" style="left:138px;top:186px;width:328px;height:30px;background:#e9ecf6"></div>
<div class="t c" id="cA1" style="left:30px;top:185.5px"><span style="letter-spacing:-0.339px">Lg-Nr.</span></div>
<div class="t c" id="cB1" style="left:140px;top:185.5px"><span style="letter-spacing:-0.339px">Lg-Nr.</span></div>
<div class="t c" id="cC1" style="left:250px;top:185.5px"><span style="letter-spacing:-0.053px">Liegenschaft</span></div>
<div class="t c" id="cD1" style="left:360px;top:185.5px"><span style="letter-spacing:-0.053px">Liegenschaft</span></div>
<div class="t c" id="cE1" style="left:470px;top:185.5px"><span style="letter-spacing:-0.141px">Baum-Nr.</span></div>
<div class="t c" id="cF1" style="left:580px;top:185.5px"><span style="letter-spacing:-0.169px">Baumgattung</span></div>
<div class="t c" id="cG1" style="left:776px;top:185.5px"><span style="letter-spacing:-0.066px">Botanisch</span></div>
<div class="t c" id="cA2" style="left:30px;top:217.5px">2</div>
<svg class="a" style="left:28px;top:218px" width="6" height="6"><path d="M0 0h5.500L0 5.500z" fill="#0d800d"/></svg>
<div class="t c" id="cC2" style="left:250px;top:217.5px"><span style="letter-spacing:-0.209px">Audi Pavillion</span></div>
<div class="t c" id="cE2" style="left:470px;top:217.5px">5</div>
<svg class="a" style="left:468px;top:218px" width="6" height="6"><path d="M0 0h5.500L0 5.500z" fill="#0d800d"/></svg>
<div class="t c" id="cF2" style="left:580px;top:217.5px"><span style="letter-spacing:-0.666px">Birke</span></div>
<div class="t c" id="cG2" style="left:776px;top:217.5px"><span style="letter-spacing:-0.718px">Betula</span></div>
<div class="t c" id="cA3" style="left:30px;top:265.5px">4</div>
<svg class="a" style="left:28px;top:266px" width="6" height="6"><path d="M0 0h5.500L0 5.500z" fill="#0d800d"/></svg>
<div class="t c" id="cC3" style="left:250px;top:265.5px"><span style="letter-spacing:-0.534px">VW Uni</span></div>
<div class="t c" id="cE3" style="left:470px;top:265.5px">1</div>
<svg class="a" style="left:468px;top:266px" width="6" height="6"><path d="M0 0h5.500L0 5.500z" fill="#0d800d"/></svg>
<div class="t c" id="cF3" style="left:580px;top:265.5px"><span style="letter-spacing:-0.512px">verschiedene Gehölze</span></div>
<div class="t c" id="cG3" style="left:776px;top:265.5px"><span style="letter-spacing:-0.398px">variis arboribus</span></div>
<div class="t c" id="cA4" style="left:30px;top:313.5px">1</div>
<svg class="a" style="left:28px;top:314px" width="6" height="6"><path d="M0 0h5.500L0 5.500z" fill="#0d800d"/></svg>
<div class="t c" id="cC4" style="left:250px;top:313.5px"><span style="letter-spacing:-0.695px">VW-Park</span></div>
<div class="t c" id="cE4" style="left:470px;top:313.5px"><span style="letter-spacing:-0.442px">3 (gefällt:</span><br><span style="letter-spacing:-0.294px">30.01.2018)</span></div>
<div class="t c" id="cF4" style="left:580px;top:313.5px"><span style="letter-spacing:-0.445px">Balsam-Tanne</span></div>
<div class="t c" id="cG4" style="left:776px;top:313.5px"><span style="letter-spacing:-0.51px">Abies balsamea</span></div>
<div class="t c" id="cA5" style="left:30px;top:361.5px">1</div>
<svg class="a" style="left:28px;top:362px" width="6" height="6"><path d="M0 0h5.500L0 5.500z" fill="#0d800d"/></svg>
<div class="t c" id="cC5" style="left:250px;top:361.5px"><span style="letter-spacing:-0.695px">VW-Park</span></div>
<div class="t c" id="cE5" style="left:470px;top:361.5px"><span style="letter-spacing:-0.472px">4 (gefällt:</span><br><span style="letter-spacing:-0.394px">14.01.2019)</span></div>
<div class="t c" id="cF5" style="left:580px;top:361.5px"><span style="letter-spacing:-0.749px">Pflaume</span></div>
<div class="t c" id="cG5" style="left:776px;top:361.5px"><span style="letter-spacing:-0.578px">Prunus domestica</span></div>
<div class="t c" id="cA6" style="left:30px;top:409.5px">1</div>
<svg class="a" style="left:28px;top:410px" width="6" height="6"><path d="M0 0h5.500L0 5.500z" fill="#0d800d"/></svg>
<div class="t c" id="cC6" style="left:250px;top:409.5px"><span style="letter-spacing:-0.695px">VW-Park</span></div>
<div class="t c" id="cE6" style="left:470px;top:409.5px"><span style="letter-spacing:-0.452px">6 (gefällt:</span><br><span style="letter-spacing:-0.394px">14.01.2019)</span></div>
<div class="t c" id="cF6" style="left:580px;top:409.5px"><span style="letter-spacing:-0.445px">Balsam-Tanne</span></div>
<div class="t c" id="cG6" style="left:776px;top:409.5px"><span style="letter-spacing:-0.51px">Abies balsamea</span></div>
<div class="t c" id="cA7" style="left:30px;top:489.5px">1</div>
<svg class="a" style="left:28px;top:490px" width="6" height="6"><path d="M0 0h5.500L0 5.500z" fill="#0d800d"/></svg>
<div class="t c" id="cC7" style="left:250px;top:489.5px"><span style="letter-spacing:-0.695px">VW-Park</span></div>
<div class="t c" id="cE7" style="left:470px;top:489.5px"><span style="letter-spacing:-0.442px">3 (gefällt:</span><br><span style="letter-spacing:-0.294px">30.01.2018)</span></div>
<div class="t c" id="cF7" style="left:580px;top:489.5px"><span style="letter-spacing:-0.445px">Balsam-Tanne</span></div>
<div class="t c" id="cG7" style="left:776px;top:489.5px"><span style="letter-spacing:-0.51px">Abies balsamea</span></div>
<div class="t c" id="cA8" style="left:30px;top:537.5px">1</div>
<svg class="a" style="left:28px;top:538px" width="6" height="6"><path d="M0 0h5.500L0 5.500z" fill="#0d800d"/></svg>
<div class="t c" id="cC8" style="left:250px;top:537.5px"><span style="letter-spacing:-0.695px">VW-Park</span></div>
<div class="t c" id="cE8" style="left:470px;top:537.5px"><span style="letter-spacing:-0.449px">24 (gefällt:</span><br><span style="letter-spacing:-0.384px">27.09.2019)</span></div>
<div class="t c" id="cF8" style="left:580px;top:537.5px"><span style="letter-spacing:-0.559px">Weihnachtsbaum, Christbaum</span></div>
<div class="t c" id="cG8" style="left:776px;top:537.5px"><span style="letter-spacing:-0.526px">Abienus festuschristus</span></div>
<div class="a" id="selb" style="left:28px;top:185px;width:441px;height:34px;border:solid #000;border-width:1px 3px 3px 1px"></div>
<div class="a" style="left:464px;top:214px;width:7px;height:7px;background:#fff"></div>
<div class="a" style="left:466px;top:216px;width:5px;height:5px;background:#000"></div>
<svg class="a" style="left:0;top:167px" width="916" height="80"><rect x="21.5" y="10.500" width="453" height="49" fill="none" stroke="#22b14c" stroke-width="5"/><path d="M99.8 26.8 L120.5 19.5 L121.0 22.6 L143.3 22.6 L143.3 31.4 L121.0 31.4 L120.5 34.5 Z" fill="#22b14c" stroke="#22b14c" stroke-width="3" stroke-linejoin="round"/><path d="M328.9 28.3 L350.2 20.4 L350.7 23.9 L372.5 23.9 L372.5 32.3 L350.7 32.3 L350.2 36.2 Z" fill="#22b14c" stroke="#22b14c" stroke-width="3" stroke-linejoin="round"/></svg>
<!--/SHEET-->
</body></html>
